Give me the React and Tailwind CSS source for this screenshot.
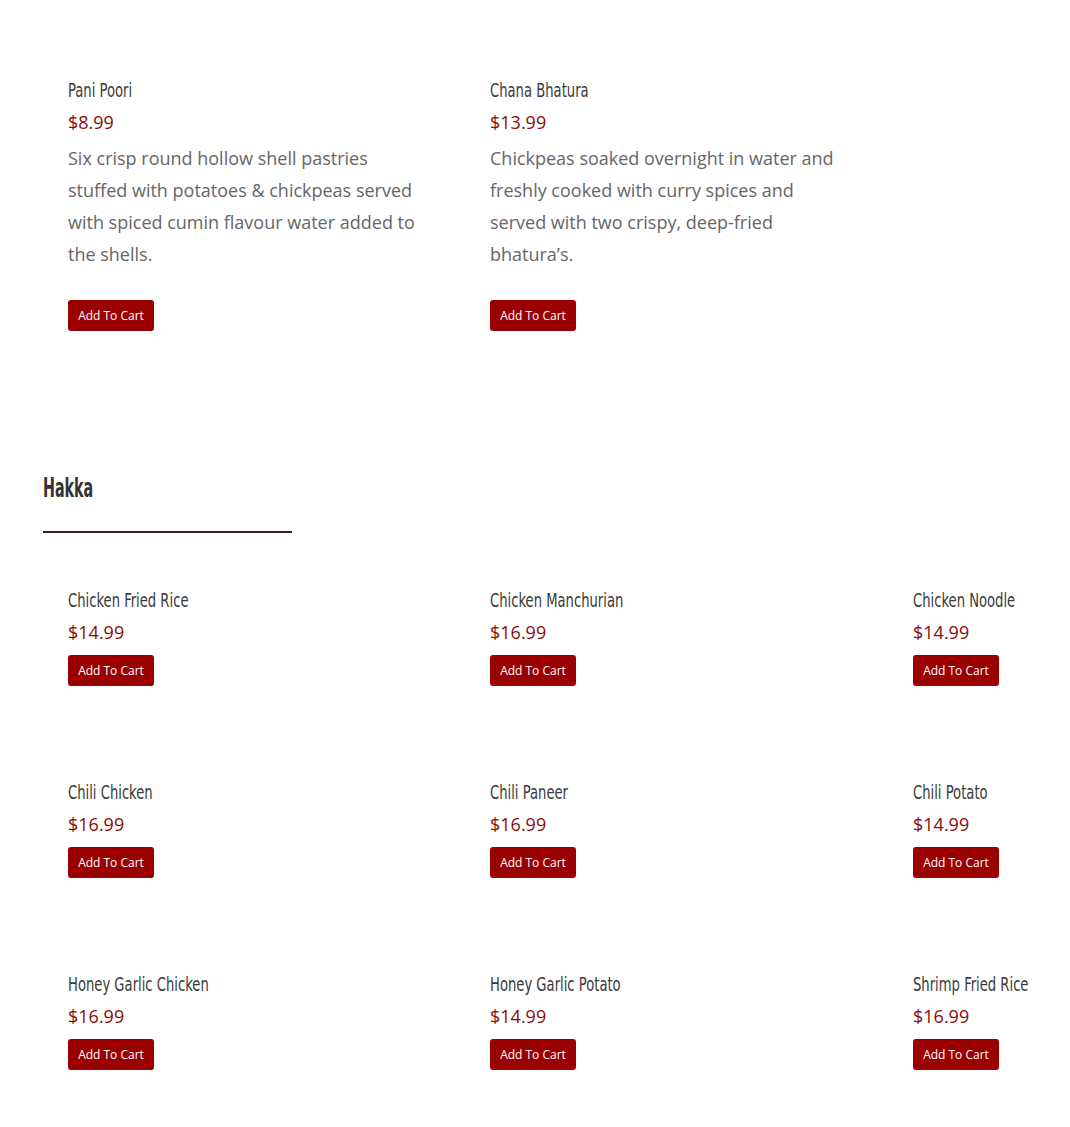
import React from 'react';

const titleFont = { fontFamily: '"Liberation Sans Narrow", "DejaVu Sans Condensed", "Liberation Sans", sans-serif' };

const featured = [
  {
    name: 'Pani Poori',
    price: '$8.99',
    desc: 'Six crisp round hollow shell pastries stuffed with potatoes & chickpeas served with spiced cumin flavour water added to the shells.',
  },
  {
    name: 'Chana Bhatura',
    price: '$13.99',
    desc: 'Chickpeas soaked overnight in water and freshly cooked with curry spices and served with two crispy, deep-fried bhatura’s.',
  },
];

const hakka = [
  { name: 'Chicken Fried Rice', price: '$14.99' },
  { name: 'Chicken Manchurian', price: '$16.99' },
  { name: 'Chicken Noodle', price: '$14.99' },
  { name: 'Chili Chicken', price: '$16.99' },
  { name: 'Chili Paneer', price: '$16.99' },
  { name: 'Chili Potato', price: '$14.99' },
  { name: 'Honey Garlic Chicken', price: '$16.99' },
  { name: 'Honey Garlic Potato', price: '$14.99' },
  { name: 'Shrimp Fried Rice', price: '$16.99' },
];

const AddButton = ({ className = '' }) => (
  <button className={`block h-[31px] w-[86px] rounded-[3px] bg-[#9b0000] text-center text-[12px] leading-[31px] text-white ${className}`}>
    Add To Cart
  </button>
);

const MenuItem = ({ item }) => (
  <div className="pl-[25px]">
    <h3 className="h-[24px] whitespace-nowrap text-[19px] leading-[24px] text-[#3a3a3a]" style={titleFont}>
      <span className="inline-block origin-left scale-x-[0.77]">{item.name}</span>
    </h3>
    <p className="mt-[4px] text-[18px] font-medium leading-[32px] text-[#8b0b0b]">{item.price}</p>
    {item.desc ? (
      <>
        <p className="mt-[4px] w-[356px] text-[18px] leading-[32px] text-[#666666]">{item.desc}</p>
        <AddButton className="mt-[30px]" />
      </>
    ) : (
      <AddButton className="mt-[7px]" />
    )}
  </div>
);

export default function App() {
  return (
    <div className="min-h-[1127px] w-full overflow-hidden bg-white" style={{ fontFamily: '"Open Sans", "Liberation Sans", sans-serif' }}>
      <section className="ml-[43px] pt-[78px]">
        <div className="grid w-[1268px] grid-cols-[422px_423px_423px]">
          {featured.map((item) => (
            <MenuItem key={item.name} item={item} />
          ))}
        </div>
      </section>

      <section className="ml-[43px] pt-[141px] pb-[60px]">
        <h2 className="h-[32px] text-[26px] font-bold leading-[32px] text-[#333333]" style={titleFont}>
          <span className="inline-block origin-left scale-x-[0.61]">Hakka</span>
        </h2>
        <div className="mt-[27px] h-[2px] w-[249px] bg-[#3b1a20]" />
        <div className="mt-[55px] grid w-[1268px] grid-cols-[422px_423px_423px] gap-y-[94px]">
          {hakka.map((item) => (
            <MenuItem key={item.name} item={item} />
          ))}
        </div>
      </section>
    </div>
  );
}
